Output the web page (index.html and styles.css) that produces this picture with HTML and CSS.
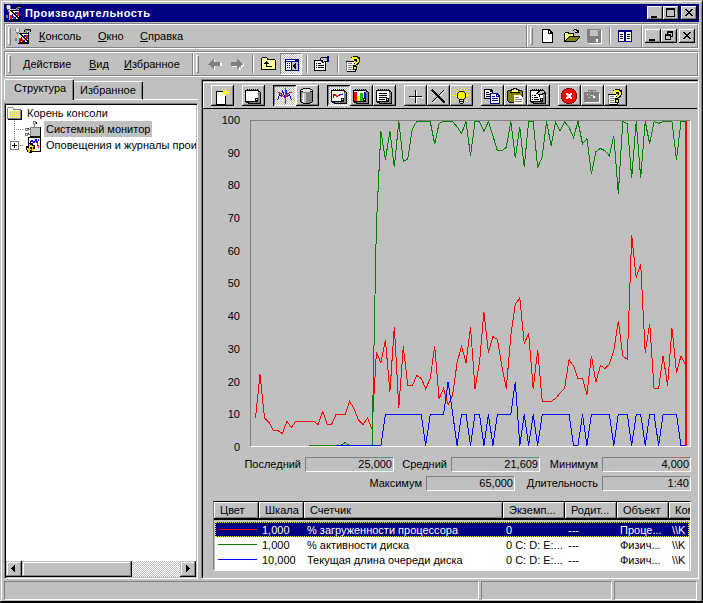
FILE: index.html
```
<!DOCTYPE html>
<html lang="ru">
<head>
    <meta charset="UTF-8">
    <meta name="viewport" content="width=device-width, initial-scale=1.0">
    <title>Производительность</title>
    <link rel="stylesheet" href="styles.css">
</head>
<body>
    <!-- Icon set -->
    <svg class="sprite" width="0" height="0">
        <symbol id="i-perf" viewBox="0 0 16 16">
            <path fill="#000" d="M3 4h11v12H3zM10 1h6v1h-6zM15 1h1v3h-1zM9 2h1v2H9z"/>
            <path fill="#c0c0c0" d="M3 4h10v1H3zM3 5h1v10H3z"/>
            <path fill="#fff" d="M4 6h9v8H4z"/>
            <path fill="#808080" d="M0 1h1v2H0zM4 1h1v3H4zM1 4h3v1H1zM2 5h1v2H2zM0 10h2v3H0zM11 2h4v1h-4zM10 3h2v2h-2z"/>
            <path fill="#e0e0e0" d="M1 0h3v4H1z"/>
            <path fill="#f00" d="M4 10h2v4H4zM7 11h1v3H7zM11 7h2v4h-2z"/>
            <path fill="#00f" d="M6 9h1v4H6zM8 12h2v2H8zM9 7h2v2H9z"/>
            <path d="M4 5h2v1h1v1h1v1h1v1h1v1h1v1h1v1h1v2h-1v-1h-1v-1h-1v-1H9v-1H8V9H7V8H6V7H5V6H4z"/>
            <path fill="#ff0" d="M4 6h1v1H4zM5 7h1v1H5zM6 8h1v1H6zM7 9h1v1H7zM8 10h1v1H8zM9 11h1v1H9zM10 12h1v1h-1zM11 13h1v1h-1z"/>
        </symbol>
        <symbol id="i-page" viewBox="0 0 16 16">
            <path d="M3 1h7l4 4v10H3z"/>
            <path fill="#fff" d="M4 2h5v4h4v8H4z"/>
            <path fill="#fff" d="M10 3h1v2h-1z"/>
        </symbol>
        <symbol id="i-open" viewBox="0 0 18 16">
            <path d="M2 4h4v1h5v3h6v1l-4 5H1V5h1z"/>
            <path fill="#ff8" d="M2 5h3v1h5v2H6L2 12z"/>
            <path fill="#808000" d="M6 9h10l-4 4H3z"/>
            <path d="M10 2h1V1h3v1h1v2h-1V3h-1V2h-2v1h-1zM15 2h1v3h-4V4h3z"/>
        </symbol>
        <symbol id="i-save" viewBox="0 0 16 16">
            <path fill="#fff" d="M2 2h14v14H3v-1H2z"/>
            <path fill="#808080" d="M1 1h14v14H2v-1H1z"/>
            <path fill="#c0c0c0" d="M4 2h8v6H4zM13 2h1v1h-1z"/>
            <path fill="#fff" d="M10 11h2v3h-2z"/>
        </symbol>
        <symbol id="i-list" viewBox="0 0 16 16">
            <path fill="#000080" d="M1 2h14v12H1z"/>
            <path fill="#fff" d="M2 4h5v9H2zM9 4h5v9H9z"/>
            <path d="M3 6h3v1H3zM3 8h3v1H3zM3 10h3v1H3zM10 6h3v1h-3zM10 8h3v1h-3zM10 10h3v1h-3z"/>
        </symbol>
        <symbol id="i-pane" viewBox="0 0 16 16">
            <path fill="#000080" d="M1 2h14v12H1z"/>
            <path fill="#fff" d="M2 5h5v8H2z"/>
            <path fill="#c0c0c0" d="M8 5h6v8H8z"/>
            <path d="M3 6h1v1H3zM3 8h1v1H3zM3 10h1v1H3zM5 6h1v1H5zM5 8h1v1H5zM5 10h1v1H5zM12 6v6h-1v-1h-1v-1H9V8h1V7h1V6z"/>
            <path fill="#fff" d="M2 3h9v1H2z"/>
        </symbol>
        <symbol id="i-left" viewBox="0 0 16 16">
            <path fill="#fff" d="M7 4h1v3h7v3H8v4H7z"/>
            <path fill="#808080" d="M1 8h1V7h1V6h1V5h1V4h1V3h1v3h6v4H7v3H6v-1H5v-1H4v-1H3V9H1z"/>
        </symbol>
        <symbol id="i-right" viewBox="0 0 16 16">
            <path fill="#fff" d="M3 10h8v3h1v-1h1v-1h1v-1h1V8h-1v1h-2v5h-2v-3H3z"/>
            <path fill="#808080" d="M14 8h-1V7h-1V6h-1V5h-1V4H9V3H8v3H2v4h6v3h1v-1h1v-1h1v-1h1V9h2z"/>
        </symbol>
        <symbol id="i-up" viewBox="0 0 16 16">
            <path d="M2 1h5v1h1v1h7v1h1v10H1V2h1z"/>
            <path fill="#ffffa0" d="M2 2h5v2h8v9H2z"/>
            <path d="M6 5h1v1h1v1h1v1H7v2h5v1H6V8H4V7h1V6h1z"/>
        </symbol>
        <symbol id="i-prop" viewBox="0 0 18 16">
            <path d="M1 4h12v11H1z"/>
            <path fill="#fff" d="M2 5h10v9H2z"/>
            <path d="M3 7h1v1H3zM5 7h3v1H5zM3 9h1v1H3zM5 9h6v1H5zM3 11h1v1H3zM5 11h6v1H5zM7 2h1V1h6v5h-3v1H9V6H8V5H6V4h1z"/>
            <path fill="#c0c0c0" d="M8 2h6v3h-3v1h-1V4H8z"/>
            <path fill="#000080" d="M14 0h2v6h-2z"/>
        </symbol>
        <symbol id="i-help" viewBox="0 0 16 16">
            <path fill="#fff" d="M1 5h9v10H1z"/>
            <path d="M1 5h7v1H1zM10 13h1v3H2v-1h8z"/>
            <path fill="#808080" d="M1 6h1v9H1zM3 7h4v1H3zM3 9h5v1H3zM3 11h4v1H3zM3 13h5v1H3z"/>
            <path d="M6 1h2V0h5v1h2v5h-1v2h-1v1h-2v1h1v4H8V9h1V7h2V5H9v1H6z"/>
            <path fill="#ff0" d="M6 2h1V1h5v1h1v1h1v3h-1v1h-1v1h-1v1H9V8h1V7h1V6h1V3H9v2H6zM9 11h2v2H9z"/>
        </symbol>
        <symbol id="i-new" viewBox="0 0 18 18">
            <path d="M3 4h10v14H3z"/>
            <path fill="#fff" d="M4 5h8v12H4z"/>
            <path fill="#ff0" d="M10 4h5v3h-5zM12 1h1v3h-1zM9 2h1v1H9zM10 3h1v1h-1zM15 3h1v1h-1zM16 2h1v1h-1zM15 5h2v1h-2zM12 7h1v2h-1zM9 7h1v1H9zM15 7h1v1h-1zM8 5h2v1H8z"/>
        </symbol>
        <symbol id="i-pad" viewBox="0 0 18 18">
            <path d="M1 3h14v1h1v1h1v12H4v-1H2v-1H1z"/>
            <path fill="#808080" d="M14 5h2v11H5v-1h9z"/>
            <path fill="#fff" d="M2 4h12v7h-3v3H2z"/>
            <path fill="#fff" d="M12 12h1v1h-1z"/>
            <path d="M3 2h1v2H3zM5 2h1v2H5zM7 2h1v2H7zM9 2h1v2H9zM11 2h1v2h-1zM13 2h1v2h-1z"/>
        </symbol>
        <symbol id="i-activity" viewBox="0 0 18 18">
            <path fill="none" stroke="#00f" d="M1.500 13l2-5 2 1 1-5 2 5 2-5 1 5 2-1 2 5"/>
            <path fill="none" stroke="#f00" d="M2 5l3 2 4 4 4-5 3-1"/>
            <path fill="#f00" d="M9 1h1v16H9z"/>
        </symbol>
        <symbol id="i-disk" viewBox="0 0 18 18">
            <path d="M5 1h7v1h2v1h1v12h-1v1h-2v1H5v-1H3v-1H2V3h1V2h2z"/>
            <path fill="#808080" d="M3 5h11v10h-2v1H5v-1H3z"/>
            <path fill="#e0e0e0" d="M5 2h7v1h2v1h-2v1H5V4H3V3h2z"/>
            <path fill="#c0c0c0" d="M4 6h4v10H5v-1H4z"/>
            <path fill="#fff" d="M5 6h1v9H5z"/>
        </symbol>
        <symbol id="i-plus" viewBox="0 0 18 18">
            <path fill="#fff" d="M10 4h1v13h-1zM4 10h13v1H4z"/>
            <path d="M9 3h1v13H9zM3 9h13v1H3z"/>
        </symbol>
        <symbol id="i-del" viewBox="0 0 18 18">
            <path fill="none" stroke="#fff" d="M16 4L4 16M5 4l12 12"/>
            <path fill="none" stroke="#000" d="M15 3L3 15"/>
            <path fill="none" stroke="#000" stroke-width="1.5" d="M3 3l13 13"/>
        </symbol>
        <symbol id="i-bulb" viewBox="0 0 18 18">
            <path fill="#ff0" d="M9 0h1v2H9zM2 2h1v1H2zM3 3h1v1H3zM4 4h1v1H4zM15 2h1v1h-1zM14 3h1v1h-1zM13 4h1v1h-1zM0 8h3v1H0zM15 8h3v1h-3zM3 13h1v1H3zM2 14h1v1H2zM14 13h1v1h-1zM15 14h1v1h-1zM5 1h1v1H5zM12 1h1v1h-1zM1 5h1v1H1zM16 5h1v1h-1zM1 11h1v1H1zM16 11h1v1h-1zM4 6h1v4H4zM14 6h1v4h-1zM7 3h5v1H7z"/>
            <path d="M7 4h5v1h1v1h1v5h-1v1h-1v4h-1v1H8v-1H7v-4H6v-1H5V6h1V5h1z"/>
            <path fill="#ff0" d="M7 5h5v1h1v5h-1v1H7v-1H6V6h1z"/>
            <path fill="#fff" d="M8 13h3v1H8zM8 15h3v1H8z"/>
        </symbol>
        <symbol id="i-copy" viewBox="0 0 18 18">
            <path d="M1 2h7l2 2v8H1z"/>
            <path fill="#fff" d="M2 3h5v2h2v6H2z"/>
            <path d="M3 5h3v1H3zM3 7h4v1H3zM3 9h4v1H3z"/>
            <path fill="#000080" d="M7 6h7l3 3v8H7z"/>
            <path fill="#fff" d="M8 7h5v3h3v6H8zM14 8h1v1h-1z"/>
            <path fill="#000080" d="M9 9h3v1H9zM9 11h6v1H9zM9 13h6v1H9z"/>
        </symbol>
        <symbol id="i-paste" viewBox="0 0 18 18">
            <path d="M2 3h3V2h2V1h4v1h2v1h3v1h1v11h-1v1H3v-1H2v-1H1V4h1z"/>
            <path fill="#808000" d="M2 4h14v11H3v-1H2z"/>
            <path fill="#ff8" d="M6 3h2V2h2v1h2v2H6z"/>
            <path d="M4 5h10v1H4z"/>
            <path fill="#fff" d="M8 8h6l3 3v6H8z"/>
            <path fill="#808080" d="M9 10h4v1H9zM9 12h7v1H9zM9 14h7v1H9z"/>
        </symbol>
        <symbol id="i-cam" viewBox="0 0 18 18">
            <path fill="#fff" d="M2 7h15v9H2z"/>
            <path fill="#808080" d="M1 5h4V3h8v2h3v10H1z"/>
            <path fill="#c0c0c0" d="M6 4h2v1H6zM10 4h2v1h-2zM7 8h4v1H7zM5 10h2v1H5zM12 10h1v1h-1z"/>
            <path fill="#fff" d="M4 7h1v1H4zM10 9h2v2h-2z"/>
        </symbol>
        <symbol id="i-stop" viewBox="0 0 18 18">
            <path fill="#800000" d="M6 1h6v1h2v1h1v1h1v2h1v6h-1v2h-1v1h-1v1h-2v1H6v-1H4v-1H3v-1H2v-2H1V6h1V4h1V3h1V2h2z"/>
            <path fill="#f00" d="M6 2h6v1h2v1h1v2h1v6h-1v2h-1v1h-2v1H6v-1H4v-1H3v-2H2V6h1V4h1V3h2z"/>
            <path fill="#fff" d="M6 6h2v1h2V6h2v2h-1v2h1v2h-2v-1H8v1H6v-2h1V8H6z"/>
        </symbol>
        <symbol id="i-folder" viewBox="0 0 16 16">
            <path fill="#808080" d="M1 2h5v1h1v1h7v10H0V3h1z"/>
            <path d="M14 5h1v10H1v-1h13z"/>
            <path fill="#f0f060" d="M1 5h12v8H1z"/>
            <path fill="#fff" d="M1 3h5v2h7v1H2v7H1z"/>
            <path stroke="#c8c890" stroke-dasharray="1 1" d="M3 7.500h10M3 9.500h10M3 11.500h10"/>
        </symbol>
        <symbol id="i-sysmon" viewBox="0 0 18 16">
            <path fill="#808080" d="M6 6h11v10H6zM10 2h1v4h-1zM9 0h3v3H9zM1 7h3v3H1zM4 8h2v1H4zM1 12h3v3H1zM4 13h2v1H4z"/>
            <path d="M16 6h1v10H6v-1h10zM12 1h1v2h-1zM4 7h1v1H4zM4 12h1v1H4z"/>
            <path fill="#c0c0c0" d="M7 7h9v8H7z"/>
            <path fill="#fff" d="M2 8h1v1H2zM2 13h1v1H2zM10 1h1v1h-1z"/>
        </symbol>
        <symbol id="i-logs" viewBox="0 0 18 16">
            <path d="M4 0h13v15H4z"/>
            <path fill="#fff" d="M5 1h11v13H5z"/>
            <path fill="none" stroke="#00f" d="M6 6l2-3 2 3 2-4 1 4 2-4"/>
            <path fill="none" stroke="#f00" d="M11 4l2 2 2 5"/>
            <path d="M4 6h5v2h2v4h-1v3H8v1H5v-1H3v-2H2V9h2z"/>
            <path fill="#e8d800" d="M5 7h1v1h2v1h2v1H9v2h1v2H8v-1H6v2H4v-2H3v-2h2z"/>
            <path fill="#000" d="M6 10h2v2H6z"/>
        </symbol>
    </svg>

    <div class="window">
        <div class="titlebar">
            <svg class="icon"><use href="#i-perf"/></svg>
            <h1>Производительность</h1>
            <div class="win-buttons">
                <button class="cap"><svg viewBox="0 0 12 10"><path d="M2 8h6v2H2z"/></svg></button>
                <button class="cap"><svg viewBox="0 0 12 10"><path d="M1 0h9v9H1zM2 2v6h7V2z" fill-rule="evenodd"/></svg></button>
                <button class="cap last"><svg viewBox="0 0 12 10"><path d="M2 1h2v1h1v1h2V2h1V1h2v1H9v1H8v1H7v1h1v1h1v1h1v1H8V7H7V6H5v1H4v1H2V7h1V6h1V5h1V4H4V3H3V2H2z"/></svg></button>
            </div>
        </div>

        <!-- Main menu -->
        <div class="band">
            <div class="grip"></div>
            <svg class="icon menu-icon"><use href="#i-perf"/></svg>
            <span class="menu m1"><u>К</u>онсоль</span>
            <span class="menu m2"><u>О</u>кно</span>
            <span class="menu m3"><u>С</u>правка</span>
            <div class="band-end">
                <div class="divider"></div>
                <div class="grip"></div>
                <svg class="icon file-icon"><use href="#i-page"/></svg>
                <svg class="icon wide"><use href="#i-open"/></svg>
                <svg class="icon save-icon"><use href="#i-save"/></svg>
                <div class="sep tight"></div>
                <svg class="icon"><use href="#i-list"/></svg>
                <div class="divider mdi-divider"></div>
                <div class="win-buttons mdi">
                    <button class="cap"><svg viewBox="0 0 12 10"><path d="M2 8h6v2H2z"/></svg></button>
                    <button class="cap"><svg viewBox="0 0 12 10"><path d="M4 0h6v6H8v3H2V3h2zM5 2v1h3v2h1V2zM3 5v3h4V5z" fill-rule="evenodd"/></svg></button>
                    <button class="cap last"><svg viewBox="0 0 12 10"><path d="M2 1h2v1h1v1h2V2h1V1h2v1H9v1H8v1H7v1h1v1h1v1h1v1H8V7H7V6H5v1H4v1H2V7h1V6h1V5h1V4H4V3H3V2H2z"/></svg></button>
                </div>
            </div>
        </div>

        <!-- Action toolbar -->
        <div class="band tools">
            <div class="grip"></div>
            <span class="menu a1"><u>Д</u>ействие</span>
            <span class="menu a2"><u>В</u>ид</span>
            <span class="menu a3"><u>И</u>збранное</span>
            <div class="divider"></div>
            <div class="grip"></div>
            <svg class="icon back"><use href="#i-left"/></svg>
            <svg class="icon forward"><use href="#i-right"/></svg>
            <div class="sep tight"></div>
            <svg class="icon up"><use href="#i-up"/></svg>
            <div class="pressed-tool"><svg class="icon"><use href="#i-pane"/></svg></div>
            <div class="sep near"></div>
            <svg class="icon wide"><use href="#i-prop"/></svg>
            <div class="sep even"></div>
            <svg class="icon"><use href="#i-help"/></svg>
        </div>

        <div class="content">
            <div class="left">
                <div class="tabs">
                    <div class="tab active">Структура</div>
                    <div class="tab">Избранное</div>
                    <div class="tab-rest"></div>
                </div>
                <div class="tree">
                    <div class="tree-rows">
                        <div class="node root">
                            <svg class="icon"><use href="#i-folder"/></svg>
                            <span>Корень консоли</span>
                        </div>
                        <div class="node">
                            <div class="branch"></div>
                            <svg class="icon wide"><use href="#i-sysmon"/></svg>
                            <span class="selected">Системный монитор</span>
                        </div>
                        <div class="node">
                            <div class="branch end"><i class="expander"></i></div>
                            <svg class="icon wide"><use href="#i-logs"/></svg>
                            <span>Оповещения и журналы прои</span>
                        </div>
                    </div>
                    <div class="scrollbar">
                        <button class="scroll-btn"><svg viewBox="0 0 12 12"><path d="M7 2v7H6V8H5V7H4V6H3V5h1V4h1V3h1V2z"/></svg></button>
                        <div class="thumb"></div>
                        <div class="track"></div>
                        <button class="scroll-btn"><svg viewBox="0 0 12 12"><path d="M4 2v7h1V8h1V7h1V6h1V5H7V4H6V3H5V2z"/></svg></button>
                    </div>
                </div>
            </div>

            <div class="monitor">
                <div class="chart-tools">
                    <div class="group">
                        <button class="tool"><svg><use href="#i-new"/></svg></button>
                    </div>
                    <div class="group">
                        <button class="tool"><svg><use href="#i-pad"/></svg></button>
                    </div>
                    <div class="group">
                        <button class="tool on"><svg><use href="#i-activity"/></svg></button>
                        <button class="tool"><svg><use href="#i-disk"/></svg></button>
                    </div>
                    <div class="group">
                        <button class="tool on"><svg viewBox="0 0 18 18"><use href="#i-pad"/><path fill="none" stroke="#f00" d="M3 10l2-3 2 3 3-3 3 1"/><path fill="none" stroke="#00f" d="M3.500 7v4M9 9l2-2h2"/></svg></button>
                        <button class="tool"><svg viewBox="0 0 18 18"><use href="#i-pad"/><path fill="#f00" d="M2 5h3v9H2z"/><path fill="#ff0" d="M5 9h3v5H5z"/><path fill="#00c000" d="M8 6h3v8H8z"/><path fill="#00f" d="M12 5h2v6h-2z"/></svg></button>
                        <button class="tool"><svg viewBox="0 0 18 18"><use href="#i-pad"/><path d="M4 6h8v1H4zM4 8h8v1H4zM4 10h8v1H4zM4 12h6v1H4z"/></svg></button>
                    </div>
                    <div class="group">
                        <button class="tool"><svg><use href="#i-plus"/></svg></button>
                        <button class="tool"><svg><use href="#i-del"/></svg></button>
                        <button class="tool"><svg><use href="#i-bulb"/></svg></button>
                    </div>
                    <div class="group">
                        <button class="tool"><svg><use href="#i-copy"/></svg></button>
                        <button class="tool"><svg><use href="#i-paste"/></svg></button>
                        <button class="tool"><svg viewBox="0 0 18 18"><use href="#i-pad"/><path d="M3 8h1v1H3zM5 8h2v1H5zM3 10h1v1H3zM5 10h4v1H5zM3 12h1v1H3zM5 12h5v1H5zM7 6h1V5h1V4h1V3h5v1h1v3h-2v1h-3v2h-1V8H9V7H7z"/><path fill="#c0c0c0" d="M9 6h1V5h1V4h4v2h-2v1H9z"/></svg></button>
                    </div>
                    <div class="group">
                        <button class="tool"><svg><use href="#i-stop"/></svg></button>
                        <button class="tool"><svg><use href="#i-cam"/></svg></button>
                        <button class="tool"><svg viewBox="0 0 18 18"><use href="#i-help" x="1" y="2" width="16" height="16"/></svg></button>
                    </div>
                </div>

                <div class="graph">
                    <div class="y-axis">
                        <span>100</span><span>90</span><span>80</span><span>70</span><span>60</span><span>50</span><span>40</span><span>30</span><span>20</span><span>10</span><span>0</span>
                    </div>
                    <svg class="plot" id="plot" viewBox="0 0 439 325"></svg>
                </div>

                <div class="values">
                    <label class="l-last">Последний</label><output>25,000</output>
                    <label class="l-avg">Средний</label><output>21,609</output>
                    <label class="l-min">Минимум</label><output>4,000</output>
                </div>
                <div class="values">
                    <label class="l-max">Максимум</label><output>65,000</output>
                    <label class="l-dur">Длительность</label><output>1:40</output>
                </div>

                <div class="legend">
                    <div class="legend-head">
                        <span>Цвет</span><span>Шкала</span><span>Счетчик</span><span>Экземп...</span><span>Родит...</span><span>Объект</span><span>Ком</span>
                    </div>
                    <div class="legend-body">
                        <div class="legend-row current">
                            <i class="line red"></i><span>1,000</span><span>% загруженности процессора</span><span>0</span><span>---</span><span>Проце...</span><span>\\K</span>
                        </div>
                        <div class="legend-row">
                            <i class="line green"></i><span>1,000</span><span>% активности диска</span><span>0 C: D: E:...</span><span>---</span><span>Физич...</span><span>\\K</span>
                        </div>
                        <div class="legend-row">
                            <i class="line blue"></i><span>10,000</span><span>Текущая длина очереди диска</span><span>0 C: D: E:...</span><span>---</span><span>Физич...</span><span>\\K</span>
                        </div>
                    </div>
                </div>
            </div>
        </div>

        <div class="statusbar">
            <div></div>
            <div></div>
            <div></div>
        </div>
    </div>

    <script>
        // Counter samples, one per second, starting at sample "from"
        const series = [
            { color: "#ff0000", from: 0, data: [
                8.5, 21.9, 8.5, 7.2, 4.6, 4.6, 3.7, 7.5, 5.5, 7.5, 7.5, 7.5, 7.5, 7.5, 6.5, 10.5, 6.5, 6.5, 9.6, 9.6,
                9.6, 13.6, 11.4, 7.8, 6.5, 8.5, 5, 28.7, 25.6, 32.7, 16.5, 36.7, 11.6, 30.6, 18.5, 18.5, 21.6, 20.7, 17.5, 20.7,
                30.6, 14.5, 17.6, 12.6, 15.5, 25.6, 30.6, 25.6, 36.7, 17.5, 25.6, 41.1, 28.7, 33.6, 32.8, 24.6, 17.5, 34, 43.6, 45.6,
                31.5, 34.5, 17.5, 29.6, 13.6, 13.6, 13.6, 14.5, 16.3, 17.6, 26.5, 24.6, 20.7, 20.7, 15.7, 27.7, 19.5, 24.7, 23.8, 25,
                29.3, 38.5, 27.6, 26.6, 64.8, 51.8, 56.1, 28.7, 37.6, 17.5, 17.5, 27.7, 18.5, 36.1, 22.5, 27.7, 25] },
            { color: "#008000", from: 12, data: [
                0, 0, 0, 0, 0, 0, 0, 0, 0.9, 0, 0, 0, 0, 0, 0, 68, 97, 88.2, 97, 86,
                100, 87.7, 88.5, 97.7, 100, 100, 100, 100, 93.1, 99.4, 100, 100, 100, 98.3, 96.3, 100, 89.4, 100, 100, 97,
                100, 95.6, 91, 91, 92, 100, 88.8, 98.4, 86, 100, 100, 85.7, 89.1, 100, 92.5, 99.8, 97, 100, 98.2, 95.1,
                100, 93.1, 94.7, 83.9, 90.7, 91.7, 91, 89.4, 95.6, 77.7, 100, 99.3, 82.6, 100, 82.6, 100, 93.1, 100, 99.4, 100,
                100, 100, 88.2, 100, 100] },
            { color: "#0000ff", from: 18, data: [
                0, 0, 0, 0, 0, 0, 0, 0, 0, 0, 0, 9.6, 9.6, 9.6, 9.6, 9.6, 9.6, 9.6, 9.6, 9.6,
                0, 9.6, 9.6, 9.6, 9.6, 19.7, 9.9, 0, 9.6, 9.6, 0, 9.6, 9.6, 0, 9.6, 0, 9.6, 9.6, 9.6, 9.6,
                19.7, 0, 9.6, 0, 9.6, 0, 9.6, 9.6, 9.6, 9.6, 9.6, 9.6, 9.6, 0, 0, 9.6, 0, 9.6, 9.6, 9.6,
                9.6, 9.6, 0, 9.6, 9.6, 9.6, 0, 9.6, 9.6, 0, 9.6, 9.6, 0, 9.6, 9.6, 9.6, 9.6, 0, 0] }
        ];

        const plot = document.getElementById("plot");
        const step = 4.479;

        series.forEach(s => {
            const points = s.data.map((v, i) => {
                const x = 4.5 + (s.from + i) * step;
                const y = 324.5 - v * 3.24;
                return x.toFixed(1) + "," + y.toFixed(1);
            });
            plot.innerHTML += `<polyline points="${points.join(" ")}" stroke="${s.color}" />`;
        });

        // Current position marker
        plot.innerHTML += `<rect x="434" y="0" width="2" height="325" fill="#ff0000" />`;
    </script>
</body>
</html>
```

FILE: styles.css
```
* {
    margin: 0;
    padding: 0;
    box-sizing: border-box;
}

body {
    width: 703px;
    height: 603px;
    overflow: hidden;
    background: #000;
    font-family: "Liberation Sans", Arial, sans-serif;
    font-size: 11px;
    line-height: 13px;
    color: #000;
}

.sprite {
    display: none;
}

svg {
    display: block;
    flex: none;
    shape-rendering: crispEdges;
}

button {
    font: inherit;
    border: none;
    flex: none;
}

span, label {
    white-space: nowrap;
}

.icon {
    width: 16px;
    height: 16px;
}

.icon.wide {
    width: 18px;
}

.window {
    width: 703px;
    height: 602px;
    padding: 3px 2px 1px 3px;
    background: #c0c0c0;
    border: 1px solid #c0c0c0;
    border-right-color: #000;
    border-bottom-color: #000;
    box-shadow: inset 1px 1px #fff, inset -1px 0 #808080;
    display: flex;
    flex-direction: column;
}

/* Title bar */
.titlebar {
    height: 18px;
    width: 695px;
    margin-bottom: 1px;
    padding: 0 2px;
    background: #000080;
    color: #fff;
    display: flex;
    align-items: center;
}

.titlebar h1 {
    margin-left: 3px;
    font-size: 11px;
    font-weight: bold;
    letter-spacing: 0.45px;
}

.win-buttons {
    margin-left: auto;
    display: flex;
}

.cap {
    width: 16px;
    height: 14px;
    padding: 2px;
    background: #c0c0c0;
    box-shadow: inset -1px -1px #000, inset 1px 1px #fff, inset -2px -2px #808080;
}

.cap.last {
    margin-left: 2px;
}

.cap svg {
    width: 12px;
    height: 10px;
}

/* Rebar bands */
.band {
    width: 695px;
    height: 26px;
    margin-bottom: 2px;
    padding: 0 3px;
    border: 1px solid #808080;
    border-right-color: #fff;
    border-bottom-color: #fff;
    box-shadow: inset 1px 1px #fff, inset -1px -1px #808080;
    display: flex;
    align-items: center;
    flex: none;
}

.grip {
    width: 3px;
    height: 18px;
    border: 1px solid #fff;
    border-right-color: #808080;
    border-bottom-color: #808080;
    flex: none;
}

.divider {
    width: 2px;
    height: 22px;
    margin-right: 2px;
    background: #808080;
    border-right: 1px solid #fff;
    flex: none;
}

.sep {
    width: 2px;
    height: 18px;
    background: #808080;
    border-right: 1px solid #fff;
    flex: none;
}

.sep.tight {
    margin: 0 6px 0 7px;
}

.sep.near {
    margin: 0 5px 0 4px;
}

.sep.even {
    margin: 0 6px;
}

.menu-icon {
    margin-left: 4px;
}

.menu {
    flex: none;
}

.m1 {
    width: 59px;
    margin-left: 8px;
}

.m2 {
    width: 42px;
}

.band-end {
    margin-left: auto;
    display: flex;
    align-items: center;
}

.file-icon {
    margin: 0 8px 0 6px;
}

.save-icon {
    margin-left: 5px;
}

.mdi-divider {
    margin-left: 8px;
}

.a1 {
    width: 66px;
    margin-left: 12px;
}

.a2 {
    width: 35px;
}

.a3 {
    width: 68px;
}

.back {
    margin-left: 8px;
}

.forward {
    margin-left: 6px;
}

.pressed-tool {
    width: 22px;
    height: 22px;
    margin-left: 4px;
    padding: 3px 0 0 3px;
    border: 1px solid #808080;
    border-right-color: #fff;
    border-bottom-color: #fff;
    background: repeating-conic-gradient(#fff 0 25%, #c0c0c0 0 50%) 0 0 / 2px 2px;
    flex: none;
}

.content {
    height: 500px;
    display: flex;
    flex: none;
}

/* Console tree */
.left {
    width: 194px;
    margin-right: 3px;
    display: flex;
    flex-direction: column;
}

.tabs {
    height: 24px;
    display: flex;
    align-items: flex-start;
}

.tab {
    width: 69px;
    height: 19px;
    margin-top: 2px;
    padding: 2px 0 0 6px;
    border-top: 1px solid #fff;
    border-bottom: 1px solid #fff;
    border-right: 1px solid #000;
    border-radius: 0 2px 0 0;
    box-shadow: inset -1px 0 #808080;
    white-space: nowrap;
}

.tab.active {
    width: 70px;
    height: 21px;
    margin-top: 0;
    padding: 2px 0 0 9px;
    border-left: 1px solid #fff;
    border-bottom: none;
    border-radius: 2px 2px 0 0;
}

.tab-rest {
    flex: 1;
    height: 21px;
    border-bottom: 1px solid #fff;
}

.tree {
    flex: 1;
    border: 1px solid #808080;
    border-right-color: #fff;
    border-bottom-color: #fff;
    box-shadow: inset 1px 1px #000, inset -1px -1px #c0c0c0;
    padding: 1px;
    display: flex;
    flex-direction: column;
}

.tree-rows {
    flex: 1;
    background: #fff;
    overflow: hidden;
}

.node {
    height: 16px;
    display: flex;
    align-items: center;
}

.node.root span {
    margin-left: 4px;
}

.root .icon {
    margin-left: 1px;
}

.branch {
    width: 18px;
    height: 16px;
    padding: 4px 0 0 4px;
    background:
        repeating-linear-gradient(#808080 0 1px, transparent 1px 2px) 8px 0 / 1px 16px no-repeat,
        repeating-linear-gradient(90deg, #808080 0 1px, transparent 1px 2px) 8px 8px / 10px 1px no-repeat;
    flex: none;
}

.branch.end {
    background:
        repeating-linear-gradient(#808080 0 1px, transparent 1px 2px) 8px 0 / 1px 8px no-repeat,
        repeating-linear-gradient(90deg, #808080 0 1px, transparent 1px 2px) 8px 8px / 10px 1px no-repeat;
}

.expander {
    display: block;
    width: 9px;
    height: 9px;
    border: 1px solid #808080;
    background:
        linear-gradient(#000, #000) 1px 3px / 5px 1px no-repeat,
        linear-gradient(#000, #000) 3px 1px / 1px 5px no-repeat,
        #fff;
}

.node .wide + span {
    height: 16px;
    margin-left: 2px;
    padding: 2px 2px 0;
}

.node .selected {
    background: #c0c0c0;
}

.scrollbar {
    height: 16px;
    display: flex;
    flex: none;
}

.scroll-btn, .thumb {
    width: 16px;
    height: 16px;
    padding: 2px;
    background: #c0c0c0;
    box-shadow: inset -1px -1px #000, inset 1px 1px #c0c0c0, inset -2px -2px #808080, inset 2px 2px #fff;
}

.thumb {
    width: 110px;
}

.track {
    flex: 1;
    background: repeating-conic-gradient(#fff 0 25%, #c0c0c0 0 50%) 0 0 / 2px 2px;
}

/* System monitor */
.monitor {
    width: 498px;
    padding: 1px;
    border: 1px solid #808080;
    border-right-color: #fff;
    border-bottom-color: #fff;
    box-shadow: inset 1px 1px #000;
}

.chart-tools {
    height: 28px;
    padding: 3px 0 0 8px;
    border-top: 1px solid #c0c0c0;
    border-bottom: 1px solid #000;
    box-shadow: inset 1px 1px #fff;
    display: flex;
    gap: 8px;
}

.group {
    display: flex;
}

.tool {
    width: 23px;
    height: 21px;
    padding: 0 0 0 2px;
    background: #c0c0c0;
    box-shadow: inset -1px -1px #000, inset 1px 1px #fff, inset -2px -2px #808080;
}

.tool.on {
    padding: 1px 0 0 3px;
    background: repeating-conic-gradient(#fff 0 25%, #c0c0c0 0 50%) 0 0 / 2px 2px;
    box-shadow: inset 1px 1px #000, inset -1px -1px #fff, inset 2px 2px #808080;
}

.tool svg {
    width: 18px;
    height: 18px;
}

.graph {
    height: 340px;
    margin-top: 5px;
    display: flex;
}

.y-axis {
    width: 37px;
    display: flex;
    flex-direction: column;
    justify-content: space-between;
    text-align: right;
}

.plot {
    width: 441px;
    height: 327px;
    margin: 6px 0 0 10px;
    border: 1px solid #808080;
    border-right-color: #fff;
    border-bottom-color: #fff;
}

.plot polyline {
    fill: none;
    stroke-width: 1;
}

.values {
    height: 15px;
    margin-top: 3px;
    padding-right: 6px;
    display: flex;
    justify-content: flex-end;
}

.values + .values {
    margin-top: 4px;
}

.values label {
    padding: 1px 4px 0 0;
    text-align: right;
}

.values output {
    width: 89px;
    padding-right: 1px;
    border: 1px solid #808080;
    border-right-color: #fff;
    border-bottom-color: #fff;
    text-align: right;
}

.l-avg {
    width: 57px;
}

.l-min {
    width: 62px;
}

.l-dur {
    width: 87px;
}

/* Counter list */
.legend {
    height: 70px;
    margin: 10px 6px 0 10px;
    border: 1px solid #808080;
    border-top-color: #000;
    border-right-color: #fff;
    border-bottom-color: #fff;
    overflow: hidden;
}

.legend-head, .legend-row {
    display: grid;
    grid-template-columns: 45px 45px 199px 62px 52px 52px 22px;
}

.legend-head {
    height: 18px;
    border-bottom: 2px solid #000;
}

.legend-head span {
    padding: 2px 0 0 6px;
    border-right: 1px solid #000;
    box-shadow: inset 1px 1px #fff, inset -1px -1px #808080;
    overflow: hidden;
}

.legend-head span:last-child {
    border-right: none;
}

.legend-body {
    height: 48px;
    margin: 2px 1px 0;
    background: #fff;
}

.legend-row {
    height: 15px;
    line-height: 16px;
}

.legend-row span {
    padding-left: 2px;
    overflow: hidden;
}

.legend-row.current {
    background: #000080;
    color: #fff;
    outline: 1px dotted #ff0;
    outline-offset: -1px;
}

.line {
    width: 39px;
    height: 1px;
    margin: 7px 0 0 3px;
}

.red {
    background: #f00;
}

.green {
    background: #008000;
}

.blue {
    background: #00f;
}

/* Status bar */
.statusbar {
    height: 19px;
    margin-top: 2px;
    display: grid;
    grid-template-columns: 475px 131px 83px;
    gap: 2px;
    flex: none;
}

.statusbar div {
    border: 1px solid #808080;
    border-right-color: #fff;
    border-bottom-color: #fff;
}
```
